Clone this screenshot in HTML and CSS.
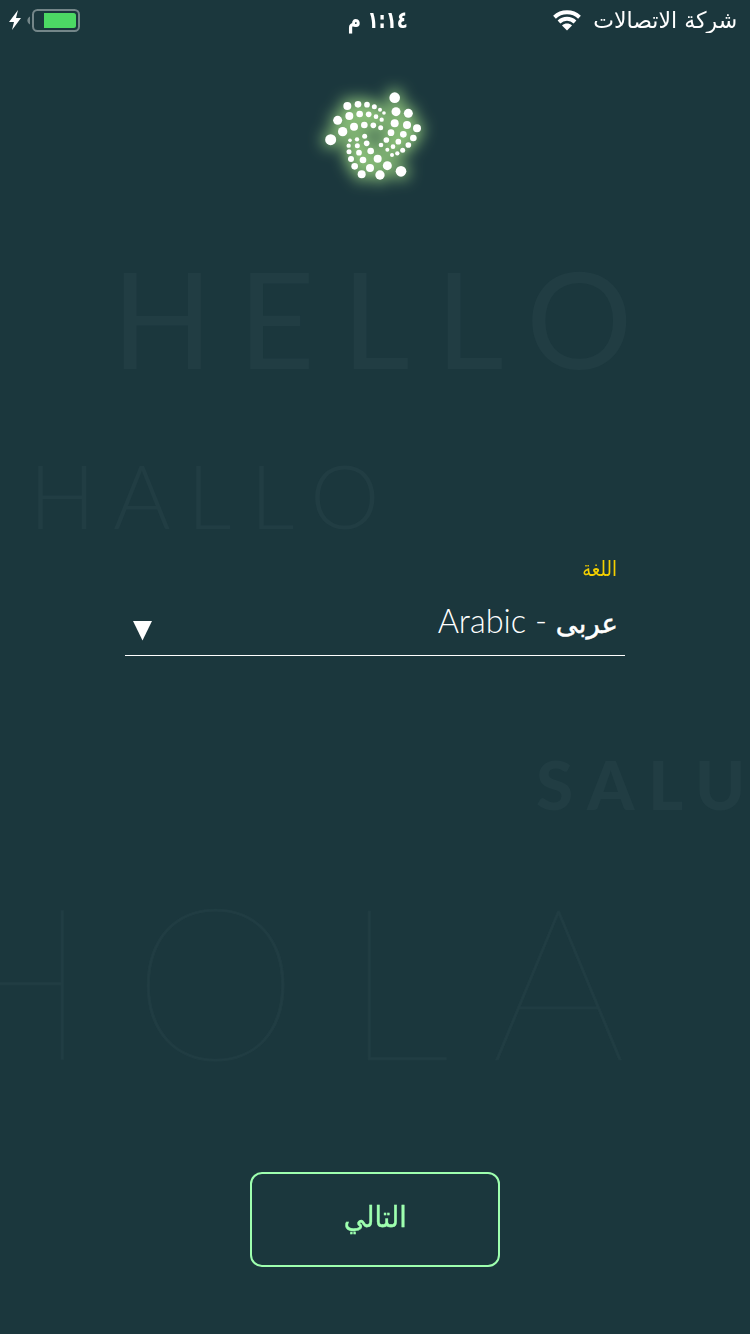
FILE: index.html
```html
<!DOCTYPE html>
<html lang="ar">
<head>
<meta charset="utf-8">
<title>اللغة</title>
<link rel="stylesheet" href="styles.css">
</head>
<body>
<div class="screen">
  <svg class="greetings" viewBox="0 0 750 1334" aria-hidden="true">
    <text class="regular" y="368.5" font-size="133" x="111.500 238 341.500 435.5 526">HELLO</text>
    <text class="light" y="529" font-size="88" x="29 113 187 250 310">HALLO</text>
    <text class="black" y="809.5" font-size="67.500" x="536 587 648 695">SALU</text>
    <text class="hairline" y="1059.5" font-size="212" x="-70.500 132.500 343.500 491">HOLA</text>
  </svg>
  <header class="status">
    <div class="power">
      <svg class="bolt" width="13" height="21" viewBox="0 0 13 21"><path d="M9 0 0 12h5L3 20 12 8H7z"/></svg>
      <svg class="battery" width="53" height="23" viewBox="0 0 53 23"><path class="nub" d="M3 7.5v8C-.5 14-.5 9 3 7.5z"/><rect class="case" x="6" y="1" width="46" height="21" rx="4.5"/><path class="charge" d="M17 4h29.500a2.500 2.500 0 0 1 2.500 2.500v10a2.500 2.500 0 0 1-2.500 2.500H17z"/></svg>
    </div>
    <div class="time" dir="rtl"><span>١:١٤ م</span></div>
    <div class="network">
      <svg class="wifi" width="28" height="21" viewBox="0 0 28 21"><path class="arc" d="M1.500 7.200C8.500.7 19.500.7 26.500 7.200M6 12c4.500-4.200 11.500-4.200 16 0"/><path class="dot" d="M9 15.500c3-2.600 7-2.600 10 0L14 20.500z"/></svg>
      <span class="carrier" dir="rtl">شركة الاتصالات</span>
    </div>
  </header>
  <main class="content">
    <svg class="logo" width="180" height="170" viewBox="-60 -60 540 510">
      <defs><filter id="glow" x="-40%" y="-40%" width="180%" height="180%"><feGaussianBlur stdDeviation="22"/></filter></defs>
      <g class="glow" filter="url(#glow)"><use href="#dots"/></g>
      <g id="dots">
        <circle cx="269" cy="83" r="16"/><circle cx="273" cy="125" r="13.500"/><circle cx="310" cy="130" r="13.500"/><circle cx="269" cy="160" r="12"/><circle cx="306" cy="165" r="12"/><circle cx="336" cy="175" r="12"/><circle cx="258" cy="188" r="10"/><circle cx="295" cy="193" r="10"/><circle cx="325" cy="204" r="10"/><circle cx="244" cy="210" r="8.500"/><circle cx="280" cy="215" r="8.500"/><circle cx="310" cy="225" r="8.500"/><circle cx="228" cy="225" r="7"/><circle cx="264" cy="230" r="7"/><circle cx="293" cy="241" r="7.500"/><circle cx="247" cy="239" r="6"/><circle cx="277" cy="250" r="6.500"/><circle cx="261" cy="255" r="6"/>
        <circle cx="77" cy="209" r="16.500"/><circle cx="98" cy="151" r="13.500"/><circle cx="113" cy="185" r="14"/><circle cx="127" cy="108" r="12"/><circle cx="133" cy="138" r="12"/><circle cx="147" cy="170" r="12"/><circle cx="159" cy="103" r="10"/><circle cx="164" cy="132" r="10"/><circle cx="178" cy="165" r="10"/><circle cx="186" cy="104" r="8.500"/><circle cx="191" cy="133" r="8.500"/><circle cx="205" cy="166" r="8.500"/><circle cx="208" cy="110" r="7.500"/><circle cx="213" cy="140" r="7"/><circle cx="227" cy="173" r="7.500"/><circle cx="225" cy="119" r="6"/><circle cx="230" cy="149" r="6.500"/><circle cx="237" cy="129" r="5.500"/>
        <circle cx="288" cy="304" r="16"/><circle cx="247" cy="287" r="13.500"/><circle cx="225" cy="315" r="14"/><circle cx="218" cy="266" r="12"/><circle cx="195" cy="294" r="12"/><circle cx="170" cy="313" r="12"/><circle cx="197" cy="243" r="10"/><circle cx="174" cy="270" r="10"/><circle cx="149" cy="289" r="10"/><circle cx="185" cy="220" r="8.500"/><circle cx="162" cy="248" r="8.500"/><circle cx="138" cy="267" r="9"/><circle cx="179" cy="199" r="7.500"/><circle cx="157" cy="227" r="7.500"/><circle cx="132" cy="245" r="7.500"/><circle cx="156" cy="208" r="6.500"/><circle cx="131" cy="227" r="6.500"/><circle cx="135" cy="211" r="5.500"/>
      </g>
    </svg>
    <section class="field">
      <label class="label" dir="rtl"><span>اللغة</span></label>
      <div class="select">
        <svg class="caret" width="19" height="20" viewBox="0 0 19 20"><path d="M0 0h19L9.500 19.500z"/></svg>
        <div class="value"><span class="latin">Arabic - </span><span class="arabic" dir="rtl">عربى</span></div>
      </div>
    </section>
    <button class="next" dir="rtl"><span>التالي</span></button>
  </main>
</div>
</body>
</html>
```
FILE: styles.css
```css
* { box-sizing: border-box; }
body { margin: 0; background: #1b373d; }
.screen {
  position: relative;
  width: 750px;
  height: 1334px;
  overflow: hidden;
  display: flex;
  flex-direction: column;
  background: #1b373d;
  color: #fff;
  font-family: Lato, "DejaVu Sans", sans-serif;
}
.greetings {
  position: absolute;
  inset: 0;
  fill: #213d43;
  font-family: Lato, sans-serif;
}
.regular { font-weight: 400; }
.light { font-weight: 300; }
.black { font-weight: 900; }
.hairline { font-weight: 100; stroke: #213d43; stroke-width: .6; }

.status {
  position: relative;
  display: grid;
  grid-template-columns: 1fr auto 1fr;
  align-items: center;
  height: 40px;
  padding: 0 13px 0 9px;
  font: 21px/40px "DejaVu Sans", sans-serif;
}
.power { display: flex; align-items: center; gap: 5px; }
.bolt { fill: #fff; }
.nub { fill: #748689; }
.case { fill: none; stroke: #748689; stroke-width: 2; }
.charge { fill: #4cd964; }
.time { font-weight: 700; margin-left: 10px; }
.time span { display: inline-block; transform: scale(.86, 1.12); }
.network { display: flex; align-items: center; justify-content: flex-end; gap: 12px; }
.carrier { display: inline-block; margin-left: 7px; transform: scale(1.05, 1.08); transform-origin: right center; }
.arc { fill: none; stroke: #fff; stroke-width: 4; }
.dot { fill: #fff; }

.content {
  position: relative;
  flex: 1;
  display: flex;
  flex-direction: column;
  align-items: center;
}
.logo { margin-top: 10px; fill: #fff; }
.glow { fill: #8fc57b; stroke: #8fc57b; stroke-width: 16; }
.field {
  width: 500px;
  height: 106px;
  margin-top: 330px;
  border-bottom: 1px solid #fff;
  padding: 0 8px;
  display: flex;
  flex-direction: column;
}
.label { font: 18px/38px "DejaVu Sans", sans-serif; color: #f5d000; }
.label span { display: inline-block; transform: scaleY(1.18); }
.select { display: flex; align-items: center; justify-content: space-between; height: 68px; }
.caret { fill: #fff; margin-top: 18px; }
.value { display: flex; align-items: baseline; white-space: pre; margin-right: -1px; }
.latin { font: 300 32.500px/50px Lato, sans-serif; }
.arabic { display: inline-block; font: 27.500px/50px "DejaVu Sans", sans-serif; -webkit-text-stroke: .5px #fff; }
.next {
  width: 250px;
  height: 95px;
  margin-top: 516px;
  border: 2px solid #9effaf;
  border-radius: 12px;
  background: none;
  color: #9effaf;
  padding: 0 0 6px;
  font: 26px/40px "DejaVu Sans", sans-serif;
}
.next span { display: inline-block; transform: scale(1.04, 1.1); -webkit-text-stroke: .3px #9effaf; }
```
